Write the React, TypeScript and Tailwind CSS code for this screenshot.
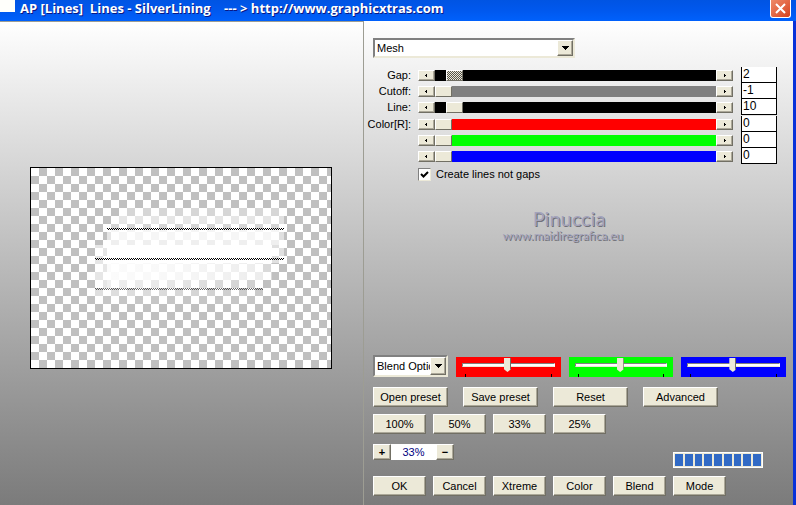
import { useId } from 'react'

const RAISED =
  'bg-[#ece9d8] border border-t-white border-l-white border-r-[#716f64] border-b-[#716f64] shadow-[inset_-1px_-1px_0_#aca899]'

type Slider = {
  label: string
  name: string
  value: number
  pos: number
  track: string
  focused?: boolean
}

const MESH_SLIDERS: Slider[] = [
  { label: 'Gap:', name: 'Gap', value: 2, pos: 4, track: 'bg-black', focused: true },
  { label: 'Cutoff:', name: 'Cutoff', value: -1, pos: 0, track: 'bg-[#808080]' },
  { label: 'Line:', name: 'Line', value: 10, pos: 4, track: 'bg-black' },
]

const COLOR_SLIDERS: Slider[] = [
  { label: 'Color[R]:', name: 'Red', value: 0, pos: 0, track: 'bg-[#ff0000]' },
  { label: '', name: 'Green', value: 0, pos: 0, track: 'bg-[#00ff00]' },
  { label: '', name: 'Blue', value: 0, pos: 0, track: 'bg-[#0000ff]' },
]

const BLENDS = [
  { name: 'Red blend', color: 'bg-[#ff0000]' },
  { name: 'Green blend', color: 'bg-[#00ff00]' },
  { name: 'Blue blend', color: 'bg-[#0000ff]' },
]

function PushButton({ label, wide }: { label: string; wide?: boolean }) {
  return (
    <button type="button" className={`${RAISED} ${wide ? 'w-[75px]' : 'w-[53px]'} h-5 leading-4 text-center whitespace-nowrap`}>
      {label}
    </button>
  )
}

function Dropdown({ label, value, className }: { label: string; value: string; className: string }) {
  return (
    <div className={`relative ${className}`}>
      <select
        aria-label={label}
        className="appearance-none w-full h-full bg-white pl-[2px] pr-4 border-2 border-t-[#808080] border-l-[#808080] border-r-[#ece9d8] border-b-[#ece9d8] rounded-none outline-none"
      >
        <option>{value}</option>
      </select>
      <span className={`${RAISED} pointer-events-none absolute top-[2px] right-[2px] bottom-[2px] w-4 flex items-center justify-center`}>
        <svg width="7" height="4" viewBox="0 0 7 4" shapeRendering="crispEdges" aria-hidden="true">
          <path d="M0 0h7v1H0zM1 1h5v1H1zM2 2h3v1H2zM3 3h1v1H3z" />
        </svg>
      </span>
    </div>
  )
}

function ArrowButton({ label, flip }: { label: string; flip?: boolean }) {
  return (
    <button type="button" aria-label={label} className={`${RAISED} w-[17px] h-full shrink-0 flex items-center justify-center`}>
      <svg width="3" height="3" viewBox="0 0 3 3" shapeRendering="crispEdges" className={flip ? 'rotate-180' : ''} aria-hidden="true">
        <path d="M1 0h1v3H1zM0 1h1v1H0z" />
      </svg>
    </button>
  )
}

function SliderRow({ label, name, value, pos, track, focused }: Slider) {
  const id = useId()
  return (
    <div className="flex h-4 items-center">
      <label htmlFor={id} className="w-[38px] mr-[7px] flex justify-end whitespace-nowrap">{label}</label>
      <div className="flex flex-1 h-[11px]">
        <ArrowButton label={`Decrease ${name}`} />
        <input
          id={id}
          type="range"
          aria-label={name}
          defaultValue={pos}
          className={`appearance-none min-w-0 flex-1 h-full ${track} [&::-webkit-slider-thumb]:appearance-none [&::-webkit-slider-thumb]:w-[17px] [&::-webkit-slider-thumb]:h-[11px] [&::-webkit-slider-thumb]:border [&::-webkit-slider-thumb]:border-t-white [&::-webkit-slider-thumb]:border-l-white [&::-webkit-slider-thumb]:border-r-[#716f64] [&::-webkit-slider-thumb]:border-b-[#716f64] ${
            focused
              ? '[&::-webkit-slider-thumb]:bg-[repeating-conic-gradient(#55534c_0_25%,#ece9d8_0_50%)] [&::-webkit-slider-thumb]:bg-[length:2px_2px]'
              : '[&::-webkit-slider-thumb]:bg-[#ece9d8]'
          }`}
        />
        <ArrowButton label={`Increase ${name}`} flip />
      </div>
      <input
        type="text"
        aria-label={`${name} value`}
        defaultValue={value}
        className="ml-2 w-9 h-4 bg-white border border-t-0 border-black pl-px pb-[2px] leading-3 text-xs outline-none"
      />
    </div>
  )
}

function BlendSlider({ name, color }: (typeof BLENDS)[number]) {
  return (
    <div className={`flex-1 h-5 px-[6px] ${color}`}>
      <input
        type="range"
        aria-label={name}
        defaultValue={49}
        className="block appearance-none bg-transparent w-full h-4 mb-px [&::-webkit-slider-runnable-track]:h-1 [&::-webkit-slider-runnable-track]:bg-white [&::-webkit-slider-runnable-track]:border [&::-webkit-slider-runnable-track]:border-t-[#808080] [&::-webkit-slider-runnable-track]:border-l-[#808080] [&::-webkit-slider-runnable-track]:border-r-white [&::-webkit-slider-runnable-track]:border-b-[#ece9d8] [&::-webkit-slider-thumb]:appearance-none [&::-webkit-slider-thumb]:w-[7px] [&::-webkit-slider-thumb]:h-[14px] [&::-webkit-slider-thumb]:-mt-[6px] [&::-webkit-slider-thumb]:bg-[#ece9d8] [&::-webkit-slider-thumb]:border-r [&::-webkit-slider-thumb]:border-[#716f64] [&::-webkit-slider-thumb]:[clip-path:polygon(0_0,100%_0,100%_80%,50%_100%,0_80%)]"
      />
      <div className="flex justify-between px-[3px]">
        <span className="w-px h-[3px] bg-black" />
        <span className="w-px h-[3px] bg-black" />
      </div>
    </div>
  )
}

function Preview() {
  return (
    <svg width="302" height="202" viewBox="-1 -1 302 202" role="img" aria-label="Preview" className="shrink-0">
      <defs>
        <pattern id="checker" width="16" height="16" patternUnits="userSpaceOnUse">
          <path d="M0 0h16v16H0z" fill="#fff" />
          <path d="M8 0h8v8H8zM0 8h8v8H0z" fill="#c0c0c0" />
        </pattern>
        <pattern id="dither" width="2" height="2" patternUnits="userSpaceOnUse">
          <path d="M0 0h1v1H0zM1 1h1v1H1z" fill="#000" />
        </pattern>
        <linearGradient id="fade">
          <stop offset="0" stopColor="#fff" stopOpacity="1" />
          <stop offset="0.4" stopColor="#fff" stopOpacity="0.85" />
          <stop offset="1" stopColor="#fff" stopOpacity="0.3" />
        </linearGradient>
      </defs>
      <g shapeRendering="crispEdges">
        <path d="M-1-1h302v202H-1z" fill="#000" />
        <path d="M0 0h300v200H0z" fill="url(#checker)" />
        <g fill="#fff">
          <path d="M96 40h152v8H96z" opacity="0.35" />
          <path d="M88 48h160v8H88z" opacity="0.6" />
          <path d="M248 42h5v53h-5z" opacity="0.5" />
          <path d="M78 56h170v5H78z" opacity="0.35" />
          <path d="M76 61h4v16h-4z" opacity="0.6" />
          <path d="M80 61h168v11H80z" opacity="0.85" />
          <path d="M80 72h168v5H80z" opacity="0.75" />
          <path d="M76 77h165v18H76z" />
          <path d="M64 77h12v18H64z" opacity="0.6" />
          <path d="M241 77h7v18h-7z" opacity="0.5" />
          <path d="M76 95h156v17H76z" opacity="0.6" />
          <path d="M64 95h12v25H64z" opacity="0.6" />
          <path d="M232 95h9v17h-9z" opacity="0.4" />
          <path d="M64 128h168v8H64z" opacity="0.1" />
        </g>
        <g fill="url(#fade)">
          <path d="M76 95h156v17H76z" opacity="0.85" />
          <path d="M76 112h156v8H76z" opacity="0.75" />
          <path d="M64 120h168v8H64z" opacity="0.5" />
        </g>
        <path d="M76 60h177v2H76zM64 90h189v2H64z" fill="url(#dither)" />
        <path d="M64 120h168v2H64z" fill="url(#dither)" opacity="0.6" />
      </g>
    </svg>
  )
}

export default function App() {
  return (
    <div className="min-h-screen flex flex-col bg-[#0831d9] font-['Liberation_Sans',Arial,sans-serif] text-[11px] leading-4 text-black">
      <header className="h-[21px] shrink-0 flex items-start bg-linear-to-b from-[#0054e3] via-[#0058ee] to-[#0061fc]">
        <span className="w-[15px] h-3 bg-[#fffffb]" />
        <h1 className="ml-[5px] flex-1 whitespace-pre font-['Open_Sans',sans-serif] text-[13px] leading-4 font-bold text-white [text-shadow:1px_1px_0_#0a1883]">
          AP [Lines]  Lines - SilverLining    --- &gt; http://www.graphicxtras.com
        </h1>
        <button
          type="button"
          aria-label="Close"
          className="w-[21px] h-[18px] mr-[5px] flex items-center justify-center rounded-b-[3px] border border-t-0 border-white bg-linear-to-br from-[#ee8a68] to-[#d6401a]"
        >
          <svg width="11" height="11" viewBox="0 0 11 11" aria-hidden="true">
            <path d="M1 1l9 9M10 1l-9 9" stroke="#fff" strokeWidth="2" />
          </svg>
        </button>
      </header>

      <main className="flex-1 grid grid-cols-[364fr_429fr] mr-[3px] bg-linear-to-b from-white to-[#7b7b7b]">
        <section className="flex items-center justify-center pt-[9px] pr-[2px] border-t border-r border-[#9d9d93]">
          <Preview />
        </section>

        <section className="flex flex-col pl-[9px] pt-[17px] pb-[9px]">
          <Dropdown label="Pattern" value="Mesh" className="w-[202px] h-5" />

          <div className="mt-[9px] mr-4 flex flex-col">
            {MESH_SLIDERS.map((s) => (
              <SliderRow key={s.name} {...s} />
            ))}
          </div>
          <div className="mt-px mr-4 flex flex-col">
            {COLOR_SLIDERS.map((s) => (
              <SliderRow key={s.name} {...s} />
            ))}
          </div>

          <label className="relative mt-[2px] ml-[45px] flex items-center self-start">
            <input type="checkbox" defaultChecked className="peer sr-only" />
            <span className="w-[13px] h-[13px] mr-[5px] flex items-center justify-center bg-white border border-t-[#808080] border-l-[#808080] border-r-[#ece9d8] border-b-[#ece9d8] peer-[:not(:checked)]:[&>svg]:hidden">
              <svg width="9" height="9" viewBox="0 0 9 9" aria-hidden="true">
                <path d="M1 4l2.5 2.5L8 2" stroke="#000" strokeWidth="2" fill="none" />
              </svg>
            </span>
            Create lines not gaps
          </label>

          <div className="mt-[26px] mr-10 text-center font-['Lato',sans-serif] text-[#a3a3bc] [text-shadow:1px_1px_0_#707078]">
            <p className="pl-3 text-xl leading-5">Pinuccia</p>
            <p className="text-xs leading-4">www.maidiregrafica.eu</p>
          </div>

          <div className="mt-auto flex flex-col">
            <div className="flex items-end gap-2 pr-[7px]">
              <Dropdown label="Blend options" value="Blend Options" className="w-[75px] h-[22px]" />
              {BLENDS.map((b) => (
                <BlendSlider key={b.name} {...b} />
              ))}
            </div>

            <div className="mt-[10px] flex gap-[15px]">
              {['Open preset', 'Save preset', 'Reset', 'Advanced'].map((t) => (
                <PushButton key={t} label={t} wide />
              ))}
            </div>

            <div className="mt-[7px] flex gap-[7px]">
              {['100%', '50%', '33%', '25%'].map((t) => (
                <PushButton key={t} label={t} />
              ))}
            </div>

            <div className="mt-[10px] h-6 flex items-start justify-between pr-[30px]">
              <div className="flex h-4">
                <button type="button" aria-label="Zoom in" className={`${RAISED} w-[18px] leading-3 font-bold`}>+</button>
                <input
                  type="text"
                  aria-label="Zoom"
                  defaultValue="33%"
                  className="w-[45px] h-4 bg-white text-center text-[#000080] outline-none"
                />
                <button type="button" aria-label="Zoom out" className={`${RAISED} w-[18px] leading-3 font-bold`}>−</button>
              </div>
              <div
                role="progressbar"
                aria-label="Progress"
                aria-valuenow={100}
                className="self-end w-[90px] h-4 flex gap-[2px] p-px bg-[#ece9d8] border border-white"
              >
                {Array.from({ length: 9 }, (_, i) => (
                  <span key={i} className="flex-1 bg-[#316ac5]" />
                ))}
              </div>
            </div>

            <div className="mt-2 flex gap-[7px]">
              {['OK', 'Cancel', 'Xtreme', 'Color', 'Blend', 'Mode'].map((t) => (
                <PushButton key={t} label={t} />
              ))}
            </div>
          </div>
        </section>
      </main>
    </div>
  )
}
